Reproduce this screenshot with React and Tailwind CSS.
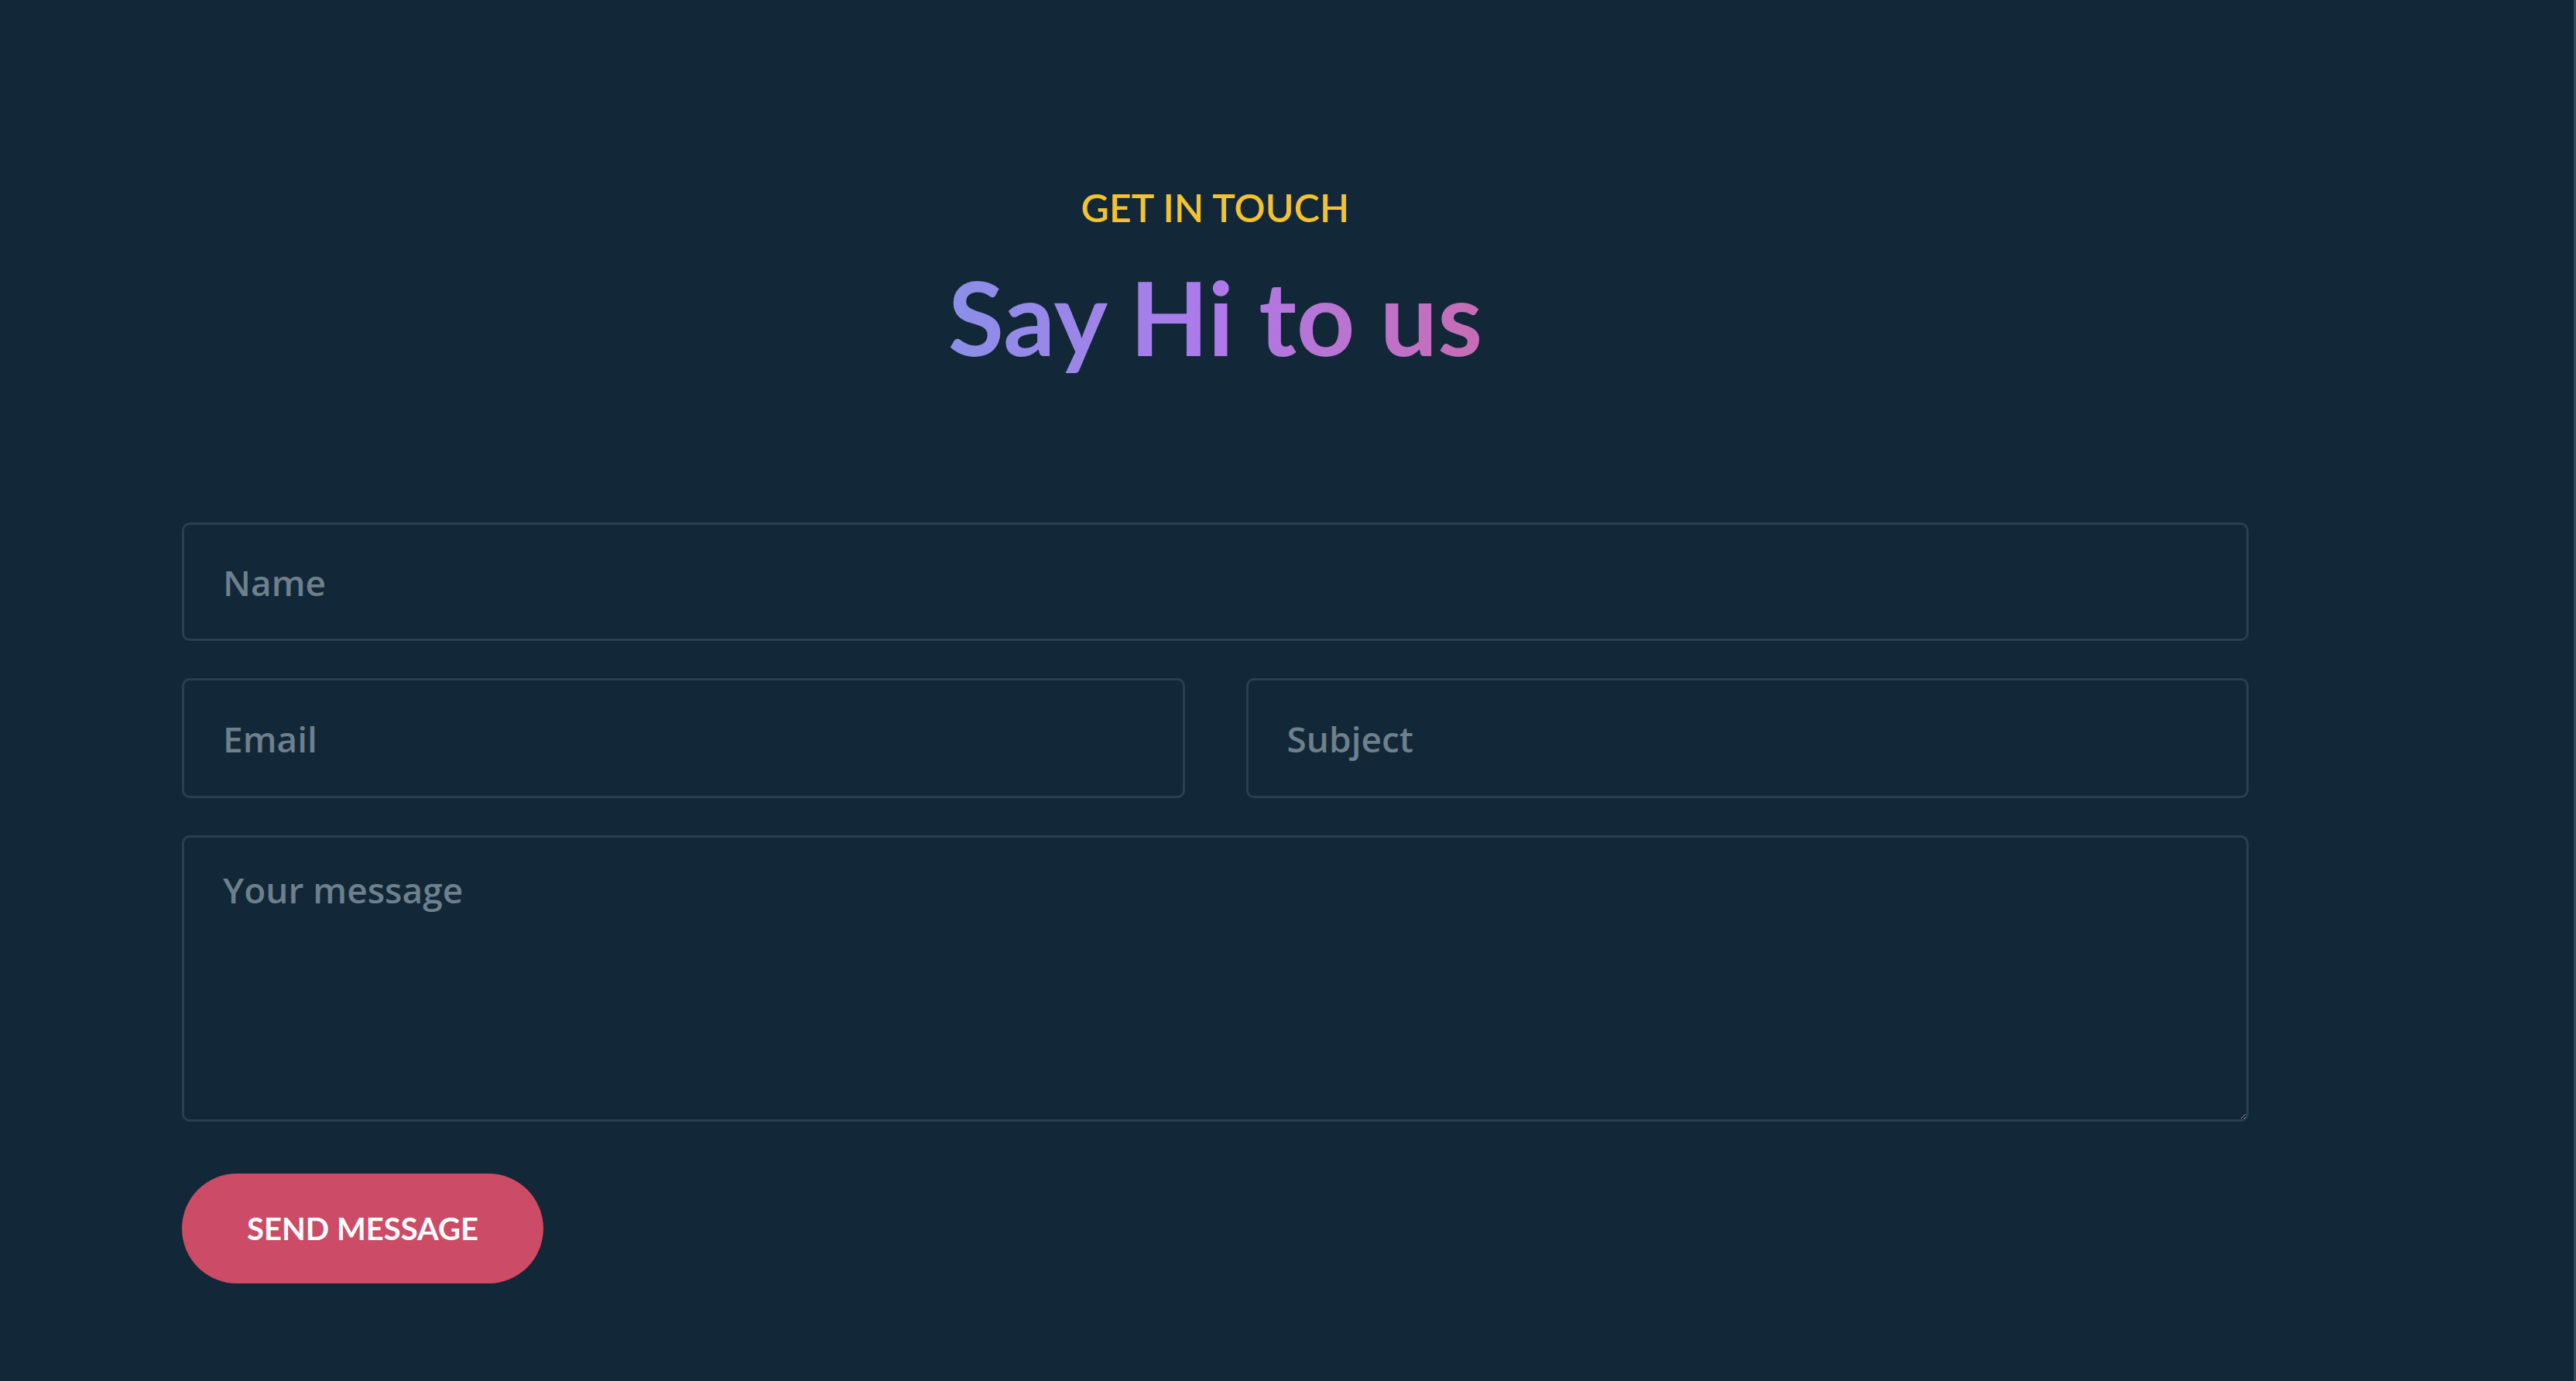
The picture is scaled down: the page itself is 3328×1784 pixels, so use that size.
export default function App() {
  const field =
    "w-full rounded-[10px] border-[3px] border-[#2b3f4f] bg-transparent px-[50px] font-['Open_Sans','Lato',sans-serif] text-[46px] font-semibold text-white outline-none placeholder:text-[#6d808c]";
  return (
    <div className="flex min-h-[1784px] w-full bg-[#122737] font-['Lato','Noto_Sans',sans-serif]">
      <div className="flex-1">
        <div className="ml-[235px] w-[2670px] pt-[238px]">
          <div className="flex flex-col items-center">
            <div className="text-[50px] font-semibold leading-[60px] text-[#f2c230]">GET IN TOUCH</div>
            <h1 className="mt-[36px] bg-gradient-to-r from-[#8a8fe8] via-[#ad79ea] to-[#c76cb4] bg-clip-text text-[132px] font-bold leading-[150px] text-transparent">
              Say Hi to us
            </h1>
          </div>
          <form className="mt-[191px] flex flex-col">
            <input type="text" placeholder="Name" className={`h-[153px] ${field}`} />
            <div className="mt-[48px] grid grid-cols-2 gap-x-[79px]">
              <input type="email" placeholder="Email" className={`h-[155px] ${field}`} />
              <input type="text" placeholder="Subject" className={`h-[155px] ${field}`} />
            </div>
            <textarea placeholder="Your message" className={`mt-[48px] h-[370px] pt-[33px] ${field}`} />
            <div className="mt-[67px]">
              <button
                type="button"
                className="h-[142px] w-[467px] rounded-full bg-[#cc4b67] text-[40px] font-bold text-white"
              >
                SEND MESSAGE
              </button>
            </div>
          </form>
        </div>
      </div>
      <div className="w-[3px] bg-[#3a4c59]" />
    </div>
  );
}
